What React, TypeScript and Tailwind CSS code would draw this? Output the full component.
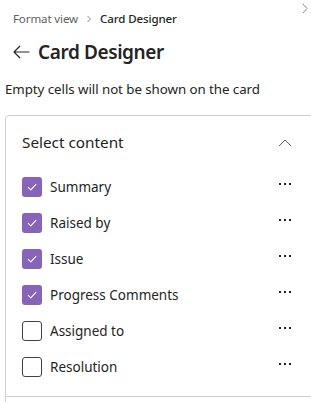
import { useState } from 'react'

interface Field {
  id: string
  label: string
  checked: boolean
}

const initialFields: Field[] = [
  { id: 'summary', label: 'Summary', checked: true },
  { id: 'raised', label: 'Raised by', checked: true },
  { id: 'issue', label: 'Issue', checked: true },
  { id: 'progress', label: 'Progress Comments', checked: true },
  { id: 'assigned', label: 'Assigned to', checked: false },
  { id: 'resolution', label: 'Resolution', checked: false },
]

function Checkbox({ checked, onClick }: { checked: boolean; onClick: () => void }) {
  return (
    <button
      type="button"
      onClick={onClick}
      className={`w-[20px] h-[20px] rounded-[3px] flex items-center justify-center shrink-0 ${
        checked ? 'bg-[#8764b8]' : 'border border-[#424242] bg-white'
      }`}
    >
      {checked && (
        <svg width="12" height="12" viewBox="0 0 12 12" fill="none">
          <path d="M2.2 6.3 4.8 8.8 9.9 3.4" stroke="white" strokeWidth="1.1" strokeLinecap="round" strokeLinejoin="round" />
        </svg>
      )}
    </button>
  )
}

function Dots() {
  return (
    <div className="flex items-center gap-[3px]">
      <span className="w-[2px] h-[2px] bg-[#242424]" />
      <span className="w-[2px] h-[2px] bg-[#242424]" />
      <span className="w-[2px] h-[2px] bg-[#242424]" />
    </div>
  )
}

export default function App() {
  const [fields, setFields] = useState(initialFields)
  const [open, setOpen] = useState(true)

  const toggle = (id: string) => {
    setFields((prev) => prev.map((f) => (f.id === id ? { ...f, checked: !f.checked } : f)))
  }

  return (
    <div
      className="w-[311px] h-[402px] overflow-hidden bg-white text-[#242424]"
      style={{ fontFamily: '"Noto Sans", "Open Sans", sans-serif' }}
    >
      {/* breadcrumb */}
      <div className="h-[38px] flex items-center pl-[13px] pr-[3px] text-[11.5px] tracking-[-0.1px]">
        <span className="text-[#616161]">Format view</span>
        <svg className="mx-[8px]" width="6" height="8" viewBox="0 0 6 8" fill="none">
          <path d="M1.5 1 4.5 4 1.5 7" stroke="#8a8a8a" strokeWidth="1" />
        </svg>
        <span className="font-medium text-[#242424]">Card Designer</span>
        <div className="flex-1" />
        <svg className="-mt-[22px]" width="6" height="11" viewBox="0 0 6 11" fill="none">
          <path d="M0.8 0.8 5 5.5 0.8 10.2" stroke="#8a80c0" strokeWidth="1" />
        </svg>
      </div>

      {/* title */}
      <div className="h-[28px] flex items-center pl-[13px] gap-[8px]">
        <svg width="17" height="14" viewBox="0 0 17 14" fill="none">
          <path d="M7 1 1 7l6 6M1 7h15.5" stroke="#242424" strokeWidth="1.2" strokeLinejoin="round" />
        </svg>
        <h1 className="text-[19px] font-semibold leading-none tracking-[-0.4px]">Card Designer</h1>
      </div>

      <p className="mt-[14px] h-[20px] flex items-center pl-[5px] text-[13.3px] tracking-[-0.05px]">
        Empty cells will not be shown on the card
      </p>

      {/* card */}
      <div className="mt-[15px] ml-[5px] w-[330px] border border-[#d1d1d1] rounded-[4px]">
        <div className="h-[53px] flex items-center pl-[16px] w-[286px] justify-between">
          <span className="text-[15.3px]">Select content</span>
          <button type="button" onClick={() => setOpen(!open)}>
            <svg width="14" height="8" viewBox="0 0 14 8" fill="none">
              <path d={open ? 'M1 7 7 1l6 6' : 'M1 1l6 6 6-6'} stroke="#616161" strokeWidth="1" />
            </svg>
          </button>
        </div>
        {open && (
          <div className="flex flex-col">
            {fields.map((f) => (
              <div key={f.id} className="h-[36px] flex items-center pl-[16px] w-[285px]">
                <Checkbox checked={f.checked} onClick={() => toggle(f.id)} />
                <span className="ml-[8px] text-[13.5px] flex-1">{f.label}</span>
                <div className="-mt-[6px]">
                  <Dots />
                </div>
              </div>
            ))}
          </div>
        )}
        <div className="mt-[11px] border-t border-[#d1d1d1] h-[40px]" />
      </div>
    </div>
  )
}
